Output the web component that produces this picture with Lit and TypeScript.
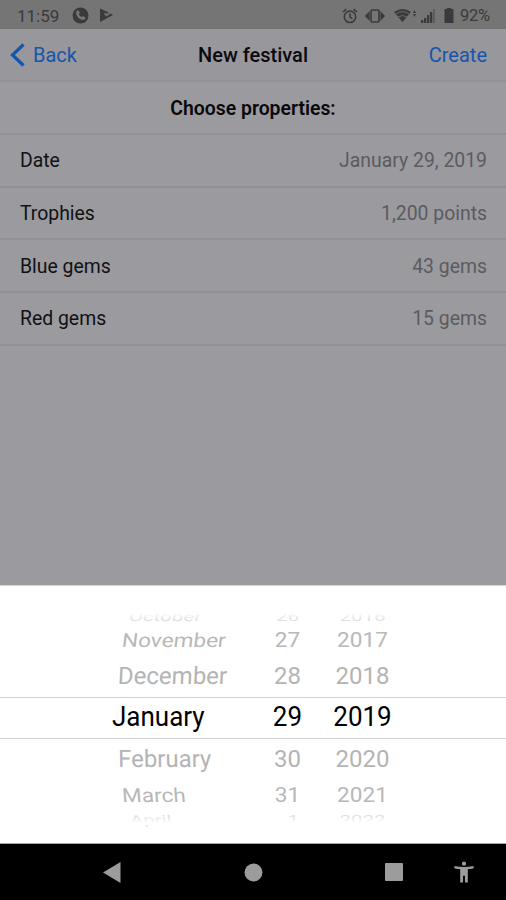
import { LitElement, html, css } from "lit";
import { customElement } from "lit/decorators.js";
import { classMap } from "lit/directives/class-map.js";

@customElement("status-bar")
class StatusBar extends LitElement {
  static styles = css`
    :host { display: block; height: 29px; background: #757575; color: #3a3a3c; }
    .bar { display: flex; height: 29px; align-items: center; padding: 2px 15px 0 17px; box-sizing: border-box; font: 17px/20px Roboto, sans-serif; }
    .clock { width: 42px; margin-right: 13px; }
    .pct { width: 31px; font-size: 16.5px; letter-spacing: -0.3px; }
    .gap { flex: 1; }
    svg { display: block; fill: currentColor; flex: none; }
    .line { fill: none; stroke: currentColor; stroke-width: 1.6; }
    .call { margin-right: 10px; }
    .alarm { margin-right: 7px; }
    .vib { margin-right: 9px; }
    .wifi { margin-right: 5px; }
    .cell { margin-right: 9px; }
    .batt { margin-right: 6px; }
    .cut { fill: #757575; }
  `;
  render() {
    return html`<div class="bar">
      <span class="clock">11:59</span>
      <svg class="call" width="17" height="17" viewBox="0 0 17 17"><circle cx="8.5" cy="8.5" r="8"/><path class="cut" d="M4.2 4.4 6 3l2 2.8-1.2 1.3c.6 1.4 1.6 2.4 2.900 3l1.400-1.100 2.600 2-1.500 1.800C8 13.500 3.400 9 4.200 4.400z"/></svg>
      <svg width="15" height="15" viewBox="0 0 15 15"><path d="M1 .500v13.500l13-7-2.700-1.400-3.600 3-2.800-2.500 1.300-1.300 1.500 1.300 2-1.700z"/></svg>
      <span class="gap"></span>
      <svg class="alarm" width="16" height="16" viewBox="0 0 16 16"><g class="line"><circle cx="8" cy="8.800" r="5.700"/><path d="M1 4l3.400-2.900M15 4l-3.400-2.900M8 5.500v3.600l2.500 1.500"/></g></svg>
      <svg class="vib" width="20" height="16" viewBox="0 0 20 16"><rect class="line" x="6" y="2" width="8" height="12" rx="1"/><path d="M4.600 3v10L0 8zM15.400 3v10L20 8z"/></svg>
      <svg class="wifi" width="22" height="15" viewBox="0 0 22 15"><path d="M0 4Q8.500-2 17 4L8.500 14z"/><path d="M19 5l1.500-3L22 5zM19 6l1.500 3L22 6z"/><path d="M1.800 6Q8.500 1.400 15.200 6M4 9q4.500-3 9 0" fill="none" stroke="#757575" stroke-width=".8"/></svg>
      <svg class="cell" width="14" height="14" viewBox="0 0 14 14"><path d="M0 11h2.300v3H0zM3 9h2.300v5H3zM6 6h2.300v8H6zM9 3h2.300v11H9z"/><path opacity=".4" d="M12 0h2v14h-2z"/></svg>
      <svg class="batt" width="10" height="15" viewBox="0 0 10 15"><path d="M3 0h4v1h2.500v14H.500V1H3z"/></svg>
      <span class="pct">92%</span>
    </div>`;
  }
}

@customElement("nav-header")
class NavHeader extends LitElement {
  static styles = css`
    :host { display: block; }
    .head { display: grid; grid-template-columns: 1fr auto 1fr; height: 53px; align-items: center; padding: 0 19px 0 19px; box-sizing: border-box; border-bottom: 2px solid #929196; background: #98979c; font: 20px/24px Roboto, sans-serif; }
    .back { display: flex; align-items: center; gap: 8px; color: #1555ac; margin-left: -9px; }
    .title { color: #0a0a0c; font-weight: 500; }
    .create { color: #1555ac; text-align: right; }
    svg { display: block; }
  `;
  render() {
    return html`<div class="head">
      <div class="back"><svg width="15" height="24" viewBox="0 0 15 24"><path d="M13.500 1.500 2.500 12l11 10.500" fill="none" stroke="currentColor" stroke-width="3.200"/></svg><span>Back</span></div>
      <div class="title">New festival</div>
      <div class="create">Create</div>
    </div>`;
  }
}

@customElement("property-list")
class PropertyList extends LitElement {
  static styles = css`
    :host { display: block; font: 19.400px/24px Roboto, sans-serif; }
    .heading, .row { display: flex; align-items: center; box-sizing: border-box; padding-top: 2px; border-bottom: 2px solid #919095; }
    .heading { height: 53px; justify-content: center; font-weight: 600; color: #09090b; }
    .row { height: 52.700px; justify-content: space-between; padding: 2px 19px 0 20px; color: #111114; }
    .value { color: #5c5b60; }
  `;
  rows = [["Date", "January 29, 2019"], ["Trophies", "1,200 points"], ["Blue gems", "43 gems"], ["Red gems", "15 gems"]];
  render() {
    return html`<div class="heading">Choose properties:</div>
      ${this.rows.map(([k, v]) => html`<div class="row"><span>${k}</span><span class="value">${v}</span></div>`)}`;
  }
}

interface WheelRow { month: string; day: string; year: string; height: number; size: number; squash: number; skew: number; inset: number; tone: string; tuck: number; }

@customElement("date-wheel")
class DateWheel extends LitElement {
  static styles = css`
    :host { display: block; height: 259px; background: #fff; padding-top: 21px; box-sizing: border-box; font-family: Roboto, sans-serif; overflow: hidden; border-bottom: 1px solid #a5a5a5; border-top: 1px solid #d5d5d7; }
    .row { display: grid; grid-template-columns: 150px 40px 31px 59px; padding-left: 112px; align-items: center; align-content: center; box-sizing: border-box; line-height: 30px; }
    .selected { border-top: 1px solid #d0d0d0; border-bottom: 1px solid #d0d0d0; }
    .row span { display: block; white-space: nowrap; }
    .month { transform-origin: left center; }
    .day { text-align: right; }
    .year { grid-column: 4; text-align: center; }
    .wheel { position: relative; }
    .wheel::before, .wheel::after { content: ""; position: absolute; left: 0; right: 0; height: 9px; z-index: 1; }
    .wheel::before { top: 4px; background: linear-gradient(#fff 20%, rgba(255, 255, 255, 0)); }
    .wheel::after { bottom: -1px; background: linear-gradient(rgba(255, 255, 255, 0), #fff 80%); }
  `;
  rows: WheelRow[] = [
    { month: "October", day: "26", year: "2016", height: 18, size: 20.5, squash: 0.6, skew: -6, inset: 17, tone: "#e0e0e0", tuck: 1 },
    { month: "November", day: "27", year: "2017", height: 30, size: 22.6, squash: 0.86, skew: -6, inset: 10, tone: "#b8b8b8", tuck: 1 },
    { month: "December", day: "28", year: "2018", height: 42, size: 24, squash: 1, skew: -3, inset: 6, tone: "#b4b4b4", tuck: 0 },
    { month: "January", day: "29", year: "2019", height: 42, size: 26, squash: 1.04, skew: 0, inset: 0, tone: "#000", tuck: -1 },
    { month: "February", day: "30", year: "2020", height: 42, size: 24, squash: 1, skew: 1, inset: 6, tone: "#b4b4b4", tuck: -1 },
    { month: "March", day: "31", year: "2021", height: 28, size: 22.6, squash: 0.86, skew: 4, inset: 10, tone: "#b8b8b8", tuck: 0.5 },
    { month: "April", day: "1", year: "2022", height: 15, size: 20.5, squash: 0.6, skew: 6, inset: 18, tone: "#e0e0e0", tuck: 2.5 },
  ];
  render() {
    return html`<div class="wheel">${this.rows.map((r) => {
      const flat = `transform: translateY(${r.tuck}px) scaleY(${r.squash})`;
      return html`<div class=${classMap({ row: true, selected: r.size === 26 })} style="height:${r.height}px;font-size:${r.size}px;color:${r.tone}">
        <span class="month" style="${flat} skewX(${r.skew}deg);margin-left:${r.inset}px">${r.month}</span>
        <span class="day" style="${flat};margin-right:${(26 - r.size) * 0.55}px">${r.day}</span>
        <span class="year" style="${flat}">${r.year}</span>
      </div>`;
    })}</div>`;
  }
}

@customElement("system-nav")
class SystemNav extends LitElement {
  static styles = css`
    :host { display: block; background: #000; height: 56px; }
    .nav { display: flex; height: 56px; align-items: center; padding-left: 103px; color: #9c9c9c; }
    svg { display: block; fill: currentColor; }
    .home { margin-left: 123px; }
    .recent { margin-left: 122px; }
    .access { margin-left: 51px; }
  `;
  render() {
    return html`<div class="nav">
      <svg width="18" height="21" viewBox="0 0 18 21"><path d="M0 10.500 17.500 0v21z"/></svg>
      <svg class="home" width="19" height="19" viewBox="0 0 19 19"><circle cx="9.500" cy="9.500" r="9"/></svg>
      <svg class="recent" width="18" height="18" viewBox="0 0 18 18"><rect width="18" height="18" rx="1"/></svg>
      <svg class="access" width="20" height="22" viewBox="0 0 21 22"><circle cx="10.500" cy="2.300" r="2.200"/><path d="M.500 4.600Q10.500 6.800 20.500 4.600V7.200L14.500 8v14h-3v-7h-2v7h-3V8L.500 7.200z"/></svg>
    </div>`;
  }
}

@customElement("app-root")
class AppRoot extends LitElement {
  static styles = css`
    :host { display: flex; flex-direction: column; height: 900px; background: #9b9a9f; overflow: hidden; }
    .fill { flex: 1; }
  `;
  render() {
    return html`<status-bar></status-bar><nav-header></nav-header><property-list></property-list><div class="fill"></div><date-wheel></date-wheel><system-nav></system-nav>`;
  }
}
